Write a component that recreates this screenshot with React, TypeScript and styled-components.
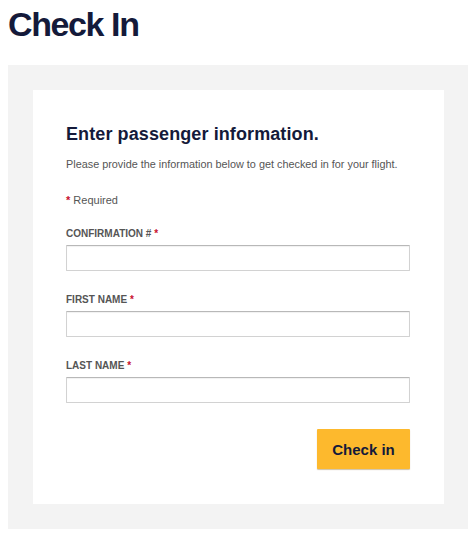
import React from "react";
import styled, { createGlobalStyle } from "styled-components";

const Global = createGlobalStyle`
  html, body { margin: 0; padding: 0; background: #ffffff; }
  body { font-family: "Liberation Sans", Arial, Helvetica, sans-serif; }
  * { box-sizing: border-box; }
`;

const Page = styled.div`
  padding: 0 6px 0 8px;
`;

const Title = styled.h1`
  margin: 0;
  padding-top: 4px;
  height: 65px;
  font-size: 34px;
  line-height: 40px;
  font-weight: 700;
  letter-spacing: -1.4px;
  color: #141a3a;
`;

const Panel = styled.div`
  background: #f3f3f3;
  padding: 25px 24px 25px 25px;
  width: 460px;
`;

const Card = styled.form`
  background: #ffffff;
  padding: 33px 34px 35px 33px;
  display: flex;
  flex-direction: column;
`;

const Heading = styled.h2`
  margin: 0;
  font-size: 18px;
  line-height: 22px;
  font-weight: 700;
  color: #141a3a;
  letter-spacing: 0.1px;
`;

const Intro = styled.p`
  margin: 12px 0 0;
  font-size: 10.85px;
  line-height: 14px;
  color: #555555;
`;

const Required = styled.p`
  margin: 22px 0 0;
  font-size: 11px;
  line-height: 14px;
  color: #555555;
`;

const Star = styled.span`
  color: #c8102e;
  font-weight: 700;
`;

const Field = styled.div<{ $first?: boolean }>`
  display: flex;
  flex-direction: column;
  margin-top: ${(p) => (p.$first ? "21px" : "23px")};
`;

const Label = styled.label`
  font-size: 10px;
  line-height: 12px;
  font-weight: 700;
  text-transform: uppercase;
  color: #555555;
  margin-bottom: 5px;
`;

const Input = styled.input`
  height: 26px;
  width: 100%;
  border: 1px solid #d2d2d2;
  border-top-color: #b8b8b8;
  border-radius: 1px;
  box-shadow: inset 0 1px 1px rgba(0, 0, 0, 0.06);
  background: #ffffff;
  font-family: inherit;
  font-size: 12px;
  padding: 0 8px;
  outline: none;
`;

const Actions = styled.div`
  display: flex;
  justify-content: flex-end;
  margin-top: 26px;
`;

const Button = styled.button`
  width: 93px;
  height: 40px;
  border: none;
  border-radius: 1px;
  background: #fdb92d;
  box-shadow: 0 1px 1px rgba(120, 80, 0, 0.35);
  font-family: inherit;
  font-size: 15px;
  font-weight: 700;
  color: #141a3a;
  cursor: pointer;
`;

const fields = [
  { id: "conf", label: "Confirmation #" },
  { id: "first", label: "First name" },
  { id: "last", label: "Last name" },
];

export default function App() {
  return (
    <>
      <Global />
      <Page>
        <Title>Check In</Title>
        <Panel>
          <Card onSubmit={(e) => e.preventDefault()}>
            <Heading>Enter passenger information.</Heading>
            <Intro>
              Please provide the information below to get checked in for your flight.
            </Intro>
            <Required>
              <Star>*</Star> Required
            </Required>
            {fields.map((f, i) => (
              <Field key={f.id} $first={i === 0}>
                <Label htmlFor={f.id}>
                  {f.label} <Star>*</Star>
                </Label>
                <Input id={f.id} type="text" />
              </Field>
            ))}
            <Actions>
              <Button type="submit">Check in</Button>
            </Actions>
          </Card>
        </Panel>
      </Page>
    </>
  );
}
